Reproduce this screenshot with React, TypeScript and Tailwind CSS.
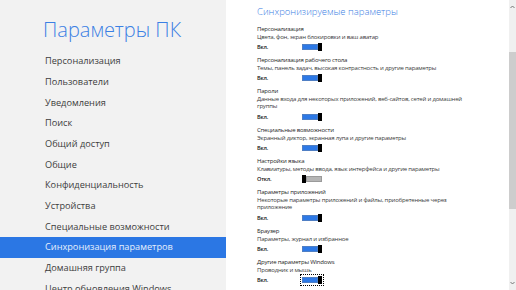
import React from "react";

const nav = [
  "Персонализация",
  "Пользователи",
  "Уведомления",
  "Поиск",
  "Общий доступ",
  "Общие",
  "Конфиденциальность",
  "Устройства",
  "Специальные возможности",
  "Синхронизация параметров",
  "Домашняя группа",
  "Центр обновления Windows",
];

type Item = { title: string; desc: string[]; on: boolean; focus?: boolean };

const items: Item[] = [
  { title: "Персонализация", desc: ["Цвета, фон, экран блокировки и ваш аватар"], on: true },
  {
    title: "Персонализация рабочего стола",
    desc: ["Темы, панель задач, высокая контрастность и другие параметры"],
    on: true,
  },
  {
    title: "Пароли",
    desc: ["Данные входа для некоторых приложений, веб-сайтов, сетей и домашней", "группы"],
    on: true,
  },
  { title: "Специальные возможности", desc: ["Экранный диктор, экранная лупа и другие параметры"], on: true },
  { title: "Настройки языка", desc: ["Клавиатуры, методы ввода, язык интерфейса и другие параметры"], on: false },
  {
    title: "Параметры приложений",
    desc: ["Некоторые параметры приложений и файлы, приобретенные через", "приложение"],
    on: true,
  },
  { title: "Браузер", desc: ["Параметры, журнал и избранное"], on: true },
  { title: "Другие параметры Windows", desc: ["Проводник и мышь"], on: true, focus: true },
];

function Toggle({ on }: { on: boolean }) {
  return on ? (
    <div className="flex items-center">
      <div className="w-[16px] h-[6px] bg-[#2d79e6] border border-[#4f7fc4]" />
      <div className="w-[4px] h-[8px] bg-black" />
    </div>
  ) : (
    <div className="flex items-center">
      <div className="w-[4px] h-[8px] bg-black" />
      <div className="w-[16px] h-[6px] bg-[#b5b5b5] border border-[#9a9a9a]" />
    </div>
  );
}

export default function App() {
  return (
    <div
      className="w-[516px] h-[290px] flex overflow-hidden bg-white"
      style={{ fontFamily: '"Open Sans", "Noto Sans", sans-serif' }}
    >
      {/* Left pane */}
      <div className="w-[226px] shrink-0 bg-[#f2f2f2] flex flex-col">
        <div className="mt-[19.5px] pl-[43px] h-[20px] leading-[20px] text-[20px] font-light text-[#3b80e4] whitespace-nowrap">
          Параметры ПК
        </div>
        <div className="mt-[11.8px] flex flex-col">
          {nav.map((n, i) => {
            const sel = i === 9;
            return (
              <div
                key={n}
                className={
                  "h-[20.66px] leading-[20.66px] pl-[45px] text-[9.2px] whitespace-nowrap shrink-0 " +
                  (sel ? "bg-[#2b77e4] text-[#e6effc]" : "text-[#3d3d3d]")
                }
              >
                {n}
              </div>
            );
          })}
        </div>
      </div>

      {/* Right pane */}
      <div className="flex-1 flex">
        <div className="flex-1 pl-[31px] flex flex-col">
          <div className="pt-[6px] h-[18px] leading-[12px] text-[9.5px] font-light text-[#3b80e4] whitespace-nowrap">
            Синхронизируемые параметры
          </div>
          <div className="mt-[8px] flex flex-col">
            {items.map((it) => (
              <div key={it.title} className="flex flex-col mb-[5.7px]">
                <div className="text-[6px] tracking-[-0.2px] leading-[7.5px] text-[#262626] whitespace-nowrap">
                  {it.title}
                </div>
                {it.desc.map((d) => (
                  <div
                    key={d}
                    className="text-[6px] tracking-[-0.2px] leading-[7.5px] text-[#3a3a3a] whitespace-nowrap"
                  >
                    {d}
                  </div>
                ))}
                <div className="mt-[1.5px] h-[9px] flex items-center">
                  <div className="w-[45px] text-[5.6px] tracking-[-0.2px] font-semibold text-[#111]">
                    {it.on ? "Вкл." : "Откл."}
                  </div>
                  {it.focus ? (
                    <div className="outline outline-1 outline-dotted outline-black outline-offset-[1px]">
                      <Toggle on={it.on} />
                    </div>
                  ) : (
                    <Toggle on={it.on} />
                  )}
                </div>
              </div>
            ))}
          </div>
        </div>

        {/* Scrollbar */}
        <div className="w-[7px] shrink-0 bg-[#f0f0f0] flex flex-col">
          <div className="h-[14px] flex items-center justify-center">
            <svg width="5" height="4" viewBox="0 0 5 4">
              <path d="M0.5 3 L2.5 1 L4.5 3" fill="none" stroke="#6a6a6a" strokeWidth="0.9" />
            </svg>
          </div>
          <div className="h-[38px]" />
          <div className="h-[157px] bg-[#cdcdcd]" />
          <div className="flex-1" />
          <div className="h-[14px] flex items-center justify-center">
            <svg width="5" height="4" viewBox="0 0 5 4">
              <path d="M0.5 1 L2.5 3 L4.5 1" fill="none" stroke="#6a6a6a" strokeWidth="0.9" />
            </svg>
          </div>
        </div>
      </div>
    </div>
  );
}
